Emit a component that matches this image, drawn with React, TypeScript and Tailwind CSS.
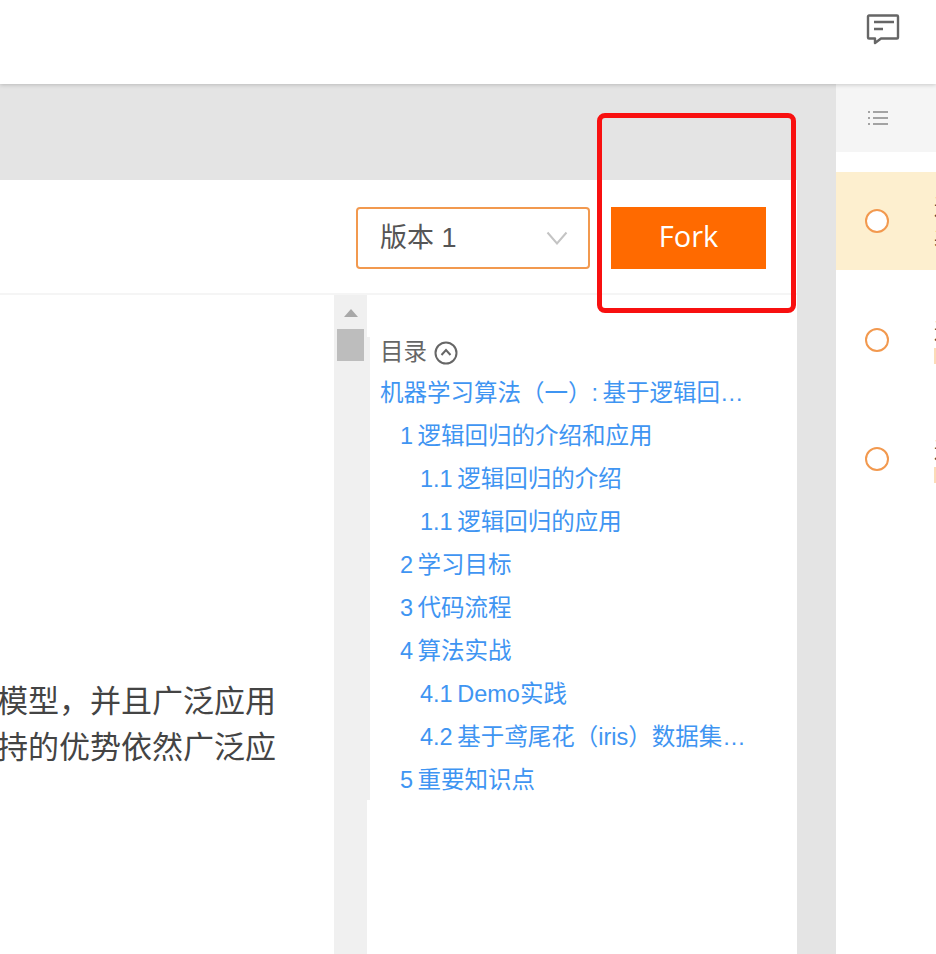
import React from "react";

const FONT = "font-['Microsoft_YaHei','Noto_Sans_CJK_SC','Noto_Sans',sans-serif]";

const TOC_ITEMS = [
  { label: "机器学习算法（一）: 基于逻辑回归的分类预测", indent: "pl-0" },
  { label: "1 逻辑回归的介绍和应用", indent: "pl-5" },
  { label: "1.1 逻辑回归的介绍", indent: "pl-10" },
  { label: "1.1 逻辑回归的应用", indent: "pl-10" },
  { label: "2 学习目标", indent: "pl-5" },
  { label: "3 代码流程", indent: "pl-5" },
  { label: "4 算法实战", indent: "pl-5" },
  { label: "4.1 Demo实践", indent: "pl-10" },
  { label: "4.2 基于鸢尾花（iris）数据集的逻辑回归", indent: "pl-10" },
  { label: "5 重要知识点", indent: "pl-5" },
];

const ChatIcon = () => (
  <svg className="shrink-0" width="34" height="32" viewBox="0 0 34 32" fill="none" stroke="#666" strokeWidth="2.4">
    <path d="M3 2.5h28a1 1 0 0 1 1 1v21a1 1 0 0 1-1 1H15l-6 4.5v-4.5H3a1 1 0 0 1-1-1v-21a1 1 0 0 1 1-1z" strokeLinejoin="round" />
    <path d="M8 9h20M8 16h9" />
  </svg>
);

const ListIcon = () => (
  <svg className="shrink-0" width="22" height="16" viewBox="0 0 22 16" stroke="#a3a3a3" strokeWidth="2" fill="none">
    <path d="M6 2h15M6 8h15M6 14h15" />
    <path d="M1 2h2M1 8h2M1 14h2" />
  </svg>
);

const TaskRow = ({ active, tag }: { active?: boolean; tag?: boolean }) => (
  <div className={`flex h-[98px] items-center overflow-hidden pl-[29px] ${active ? "bg-[#fdefcf]" : "bg-white"}`}>
    <div className="h-6 w-6 shrink-0 rounded-full border-2 border-[#f2994f] bg-white" />
    <div className="ml-[45px] flex shrink-0 flex-col gap-[6px] whitespace-nowrap text-[22px] leading-[26px] text-[#444]">
      <span>逻辑</span>
      {tag ? <span className="h-4 w-8 bg-[#fbdcb8]" /> : <span>基于</span>}
    </div>
  </div>
);

export default function App() {
  return (
    <div className={`flex h-[954px] w-[936px] flex-col overflow-hidden bg-white ${FONT}`}>
      <header className="relative z-10 flex h-[84px] shrink-0 justify-end bg-white pr-[36px] pt-[13px] shadow-[0_1px_4px_rgba(0,0,0,0.18)]">
        <ChatIcon />
      </header>

      <div className="relative flex min-h-0 flex-1">
        <div className="flex w-[836px] shrink-0 flex-col bg-[#e4e4e4] pr-[39px] pt-[96px]">
          <div className="flex min-h-0 flex-1 flex-col bg-white">
            <div className="flex h-[115px] shrink-0 items-start justify-end border-b-2 border-[#f5f5f5] pr-[31px] pt-[27px]">
              <button className="mr-[21px] flex h-[62px] w-[234px] items-center justify-between rounded border-2 border-[#f2994f] bg-white pl-[22px] pr-[20px] text-[27px] text-[#555]">
                <span className="font-['Liberation_Sans','Noto_Sans_CJK_SC',sans-serif]">版本 1</span>
                <svg className="shrink-0" width="22" height="14" viewBox="0 0 22 14" fill="none" stroke="#c4c4c4" strokeWidth="2">
                  <path d="M1.5 1.5 11 12.5l9.5-11" />
                </svg>
              </button>
              <button className="h-[62px] w-[155px] bg-[#ff6a00] pb-1 font-['Open_Sans',sans-serif] text-[29px] text-white">
                Fork
              </button>
            </div>

            <div className="flex min-h-0 flex-1">
              <div className="flex w-[334px] shrink-0 flex-col items-end overflow-hidden whitespace-nowrap pr-[58px] pt-[381px] text-[31px] leading-[46px] text-[#444]">
                <span>逻辑回归是一个分类模型，并且广泛应用</span>
                <span>但由于其所保持的优势依然广泛应</span>
              </div>

              <div className="w-[33px] shrink-0 bg-[#f0f0f0] px-[3px] pt-[14px]">
                <div className="mx-auto h-0 w-0 border-x-[7px] border-b-[8px] border-x-transparent border-b-[#a8a8a8]" />
                <div className="mt-[12px] h-[32px] w-[27px] bg-[#bdbdbd]" />
              </div>

              <div className="flex min-w-0 flex-1">
                <div className="mt-[42px] h-[463px] w-[3px] shrink-0 bg-[#f0f0f0]" />
                <div className="min-w-0 flex-1 pl-[10px] pr-[50px] pt-[41px] font-['Liberation_Sans','Noto_Sans_CJK_SC',sans-serif] [word-spacing:-2px]">
                  <div className="flex h-[34px] items-center gap-[7px] text-[23.5px] text-[#666]">
                    <span>目录</span>
                    <svg className="shrink-0" width="24" height="24" viewBox="0 0 24 24" fill="none" stroke="#666" strokeWidth="2">
                      <circle cx="12" cy="12" r="10.5" />
                      <path d="m7.5 14 4.5-5 4.5 5" />
                    </svg>
                  </div>
                  <ul className="pt-[2px] text-[23.5px] leading-[43px] text-[#3f95f2]">
                    {TOC_ITEMS.map((item) => (
                      <li key={item.label} className={`truncate ${item.indent}`}>
                        {item.label}
                      </li>
                    ))}
                  </ul>
                </div>
              </div>
            </div>
          </div>
        </div>

        <aside className="min-w-0 flex-1 overflow-hidden bg-white">
          <div className="flex h-[68px] items-center whitespace-nowrap bg-[#f5f5f5] pl-[31px] text-[22px] text-[#666]">
            <ListIcon />
            <span className="ml-[45px] shrink-0">目录</span>
          </div>
          <div className="flex flex-col gap-[21px] pt-[20px]">
            <TaskRow active />
            <TaskRow tag />
            <TaskRow tag />
          </div>
        </aside>

        <div className="pointer-events-none absolute left-[597px] top-[29px] h-[200px] w-[199px] rounded-lg border-[5px] border-[#f81010]" />
      </div>
    </div>
  );
}
